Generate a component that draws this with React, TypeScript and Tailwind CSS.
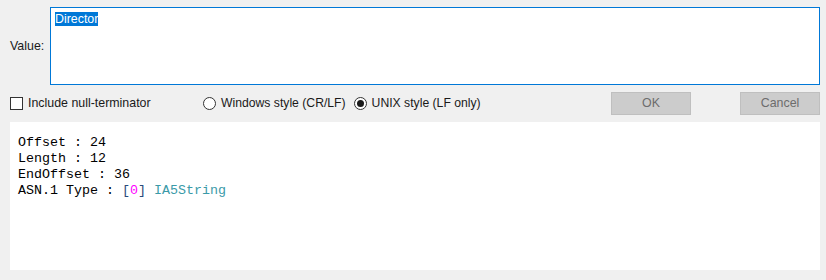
import React from 'react';

const uiFont = { fontFamily: '"Liberation Sans", Arial, sans-serif' };

const Checkbox: React.FC<{ label: string }> = ({ label }) => (
  <label className="flex items-center gap-[5px] text-[12.4px] text-[#1a1a1a]">
    <span className="w-[13px] h-[13px] border border-[#333333] bg-white inline-block" />
    {label}
  </label>
);

const Radio: React.FC<{ label: string; checked?: boolean }> = ({ label, checked }) => (
  <label className="flex items-center gap-[5px] text-[12.2px] text-[#1a1a1a]">
    <span className="w-[13px] h-[13px] rounded-full border border-[#333333] bg-white flex items-center justify-center">
      {checked && <span className="w-[7px] h-[7px] rounded-full bg-[#1a1a1a]" />}
    </span>
    {label}
  </label>
);

const Button: React.FC<{ label: string }> = ({ label }) => (
  <button
    disabled
    className="w-[80px] h-[23px] bg-[#cccccc] border border-[#bfbfbf] text-[12.4px] text-[#6d6d6d]"
  >
    {label}
  </button>
);

export default function App() {
  return (
    <div className="w-[826px] h-[280px] bg-[#f0f0f0] flex flex-col overflow-hidden" style={uiFont}>
      {/* value editor */}
      <div className="flex items-center pl-[10px] mt-[7px]">
        <span className="w-[40px] text-[12.4px] text-[#1a1a1a]">Value:</span>
        <div className="w-[770px] h-[78px] bg-white border border-[#0078d7] px-[4px] pt-[4px] text-[12.4px] leading-[15px]">
          <span className="bg-[#0078d7] text-white">Director</span>
        </div>
      </div>

      {/* options + buttons */}
      <div className="flex items-center h-[23px] mt-[7px] pl-[10px]">
        <div className="w-[193px]">
          <Checkbox label="Include null-terminator" />
        </div>
        <div className="flex items-center gap-[8px]">
          <Radio label="Windows style (CR/LF)" />
          <Radio label="UNIX style (LF only)" checked />
        </div>
        <div className="ml-auto flex gap-[49px] pr-[6px]">
          <Button label="OK" />
          <Button label="Cancel" />
        </div>
      </div>

      {/* node info */}
      <div
        className="mt-[7px] ml-[10px] mr-[6px] h-[148px] bg-white pl-[8px] pt-[13px] text-[13.33px] leading-[16px] text-black whitespace-pre"
        style={{ fontFamily: '"Liberation Mono", "Courier New", monospace' }}
      >
        <div>Offset : 24</div>
        <div>Length : 12</div>
        <div>EndOffset : 36</div>
        <div>
          ASN.1 Type : <span className="text-[#2a4a7a]">[</span>
          <span className="text-[#ff00ff]">0</span>
          <span className="text-[#2a4a7a]">]</span> <span className="text-[#3a9aa8]">IA5String</span>
        </div>
      </div>
    </div>
  );
}
